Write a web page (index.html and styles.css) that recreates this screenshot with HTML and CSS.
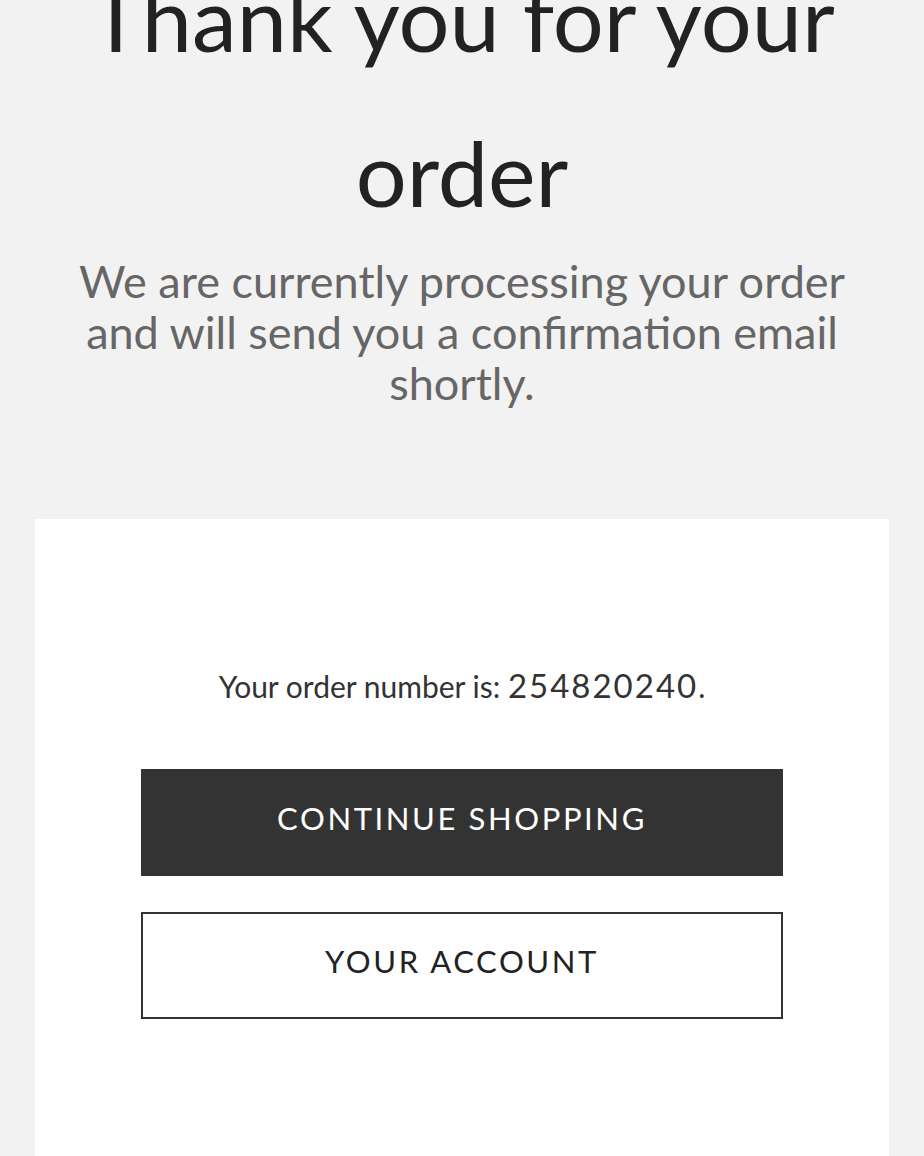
FILE: index.html
```html
<!DOCTYPE HTML>
<html>
<head>
	<meta charset="utf-8">
	<title>Thank you for your order</title>
	<link rel="stylesheet" href="styles.css">
</head>
<body>

	<div class="intro">
		<h1 class="title">Thank you for your order</h1>
		<p class="lead">We are currently processing your order and will send you a confirmation email shortly.</p>
	</div>

	<div class="card">
		<p class="order">Your order number is: <span class="order-num">254820240</span>.</p>
		<a href="#" class="button dark">CONTINUE SHOPPING</a>
		<a href="#" class="button outline">YOUR ACCOUNT</a>
	</div>

</body>
</html>
```

FILE: styles.css
```css
body {
	margin: 0;
	background: #f2f2f2;
	font-family: Lato, "Open Sans", sans-serif;
	overflow: hidden;
}

.intro {
	text-align: center;
	padding: 0 40px;
}

.title {
	margin: -60px 0 0 0;
	font-size: 90px;
	line-height: 155px;
	font-weight: 400;
	color: #222;
}

.lead {
	margin: 6px 0 0 0;
	font-size: 45px;
	line-height: 51px;
	color: #666;
}

.card {
	margin: 110px 35px 0 35px;
	background: #fff;
	height: 637px;
	padding: 146px 106px 0 106px;
	box-sizing: border-box;
}

.order {
	margin: 0 0 64px 0;
	text-align: center;
	font-size: 30px;
	color: #333;
}

.order-num {
	font-size: 33px;
	letter-spacing: 2px;
}

.button {
	display: flex;
	align-items: center;
	justify-content: center;
	height: 107px;
	padding-bottom: 10px;
	box-sizing: border-box;
	font-size: 31px;
	letter-spacing: 2.6px;
	text-decoration: none;
}

.dark {
	background: #333;
	color: #fff;
	margin-bottom: 36px;
}

.outline {
	border: 2px solid #333;
	color: #222;
}
```
